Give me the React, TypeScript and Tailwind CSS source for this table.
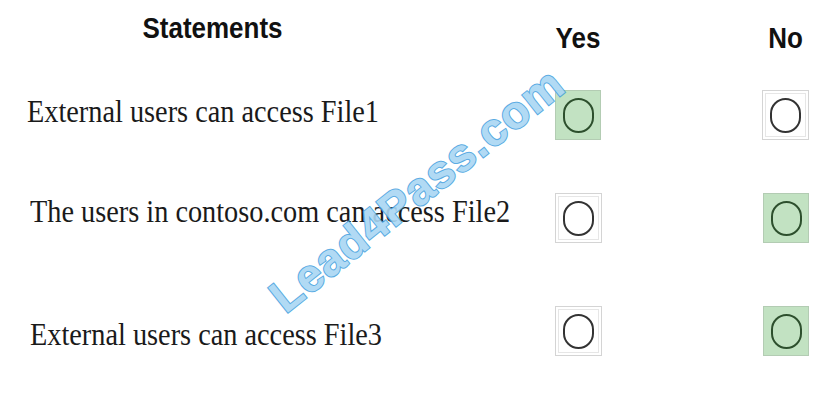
import React from 'react';

type Choice = 'yes' | 'no';

interface Statement {
  text: string;
  answer: Choice;
  textClass: string; // left pad + nudge relative to box
}

const statements: Statement[] = [
  { text: 'External users can access File1', answer: 'yes', textClass: 'pl-[27px] mt-[6px]' },
  { text: 'The users in contoso.com can access File2', answer: 'no', textClass: 'pl-[30px] mt-[3px]' },
  { text: 'External users can access File3', answer: 'no', textClass: 'pl-[30px] mt-[13px]' },
];

const RadioBox: React.FC<{ selected: boolean }> = ({ selected }) => (
  <div
    className={
      selected
        ? 'w-[46px] h-[50px] flex items-center justify-center bg-[#c2e2c2] border border-[#b3ccb3]'
        : 'w-[47px] h-[50px] flex items-center justify-center bg-white border border-[#d4d4d4] shadow-[inset_0_0_0_2px_#fff,inset_0_0_0_3px_#e6e6e6]'
    }
  >
    <div
      className={
        selected
          ? 'w-[31px] h-[35px] rounded-full border-2 border-[#2d4f2d]'
          : 'w-[31px] h-[35px] rounded-full border-2 border-[#333]'
      }
    />
  </div>
);

const App: React.FC = () => {
  const rowGaps = ['mt-0', 'mt-[53px]', 'mt-[63px]'];

  return (
    <div className="relative w-[835px] h-[418px] bg-white overflow-hidden">
      {/* header */}
      <div className="flex h-[90px] font-['Liberation_Sans',Arial,sans-serif] font-bold text-[26px] text-[#111]">
        <div className="w-[555px] flex justify-center pr-[130px] pt-[12px]">
          <span className="scale-y-[1.15]">Statements</span>
        </div>
        <div className="w-[46px] flex justify-center pt-[21px]">
          <span className="scale-y-[1.15]">Yes</span>
        </div>
        <div className="ml-[161px] w-[47px] flex justify-center pt-[21px]">
          <span className="scale-y-[1.15]">No</span>
        </div>
      </div>

      {/* rows */}
      {statements.map((s, i) => (
        <div key={i} className={`flex items-start ${rowGaps[i]}`}>
          <div
            className={`w-[555px] ${s.textClass} font-['Liberation_Serif','Times_New_Roman',serif] text-[28.3px] leading-[32px] text-[#1a1a1a]`}
          >
            <span className="inline-block scale-y-[1.1]">{s.text}</span>
          </div>
          <RadioBox selected={s.answer === 'yes'} />
          <div className="ml-[161px]">
            <RadioBox selected={s.answer === 'no'} />
          </div>
        </div>
      ))}

      {/* watermark */}
      <div className="absolute left-[417px] top-[190px] -translate-x-1/2 -translate-y-1/2 rotate-[-38.5deg] whitespace-nowrap font-['Liberation_Sans',Arial,sans-serif] font-bold text-[46px] tracking-[1px] text-[#a9d6f3] [-webkit-text-stroke:2px_#4aa3e0] [paint-order:stroke_fill] opacity-90">
        Lead4Pass.com
      </div>
    </div>
  );
};

export default App;
